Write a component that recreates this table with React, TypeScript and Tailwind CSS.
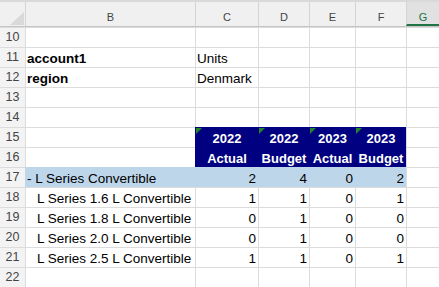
import React from "react";

type CellProps = {
  w: string;
  fill?: "navy" | "band";
  align?: "left" | "right" | "center";
  bold?: boolean;
  indent?: boolean;
  tri?: boolean;
  children?: React.ReactNode;
};

function Cell({ w, fill, align = "left", bold, indent, tri, children }: CellProps) {
  const fillCls =
    fill === "navy"
      ? "bg-[#000080] border-[#000080] text-white"
      : fill === "band"
      ? "bg-[#bdd6ea] border-[#bdd6ea] text-black"
      : "bg-white border-[#dcdcdc] text-black";
  const alignCls =
    align === "right" ? "text-right pr-[2px]" : align === "center" ? "text-center" : indent ? "pl-[11px]" : "pl-[1px]";
  return (
    <div
      className={`${w} relative shrink-0 h-full border-l border-t ${fillCls} ${alignCls} ${
        bold ? "font-bold" : ""
      } ${fill === "navy" ? "text-[13px]" : "text-[13.5px]"} pt-[3px] leading-[15px] whitespace-nowrap overflow-hidden`}
    >
      {tri && (
        <svg className="absolute top-0 left-0" width="6" height="6" viewBox="0 0 6 6">
          <polygon points="0,0 6,0 0,6" fill="#22862a" />
        </svg>
      )}
      {children}
    </div>
  );
}

const W = ["w-[170px]", "w-[63px]", "w-[51px]", "w-[46px]", "w-[51px]"];

type RowDef = {
  n: number;
  cells?: (CellProps | null)[];
};

function Row({ n, cells }: RowDef) {
  const list = cells ?? [null, null, null, null, null];
  return (
    <div className="flex h-[20px]">
      <div className="w-[25px] shrink-0 border-t border-[#dcdcdc] bg-[#f3f3f3] text-center text-[12.5px] leading-[19px] text-[#444]">
        {n}
      </div>
      {W.map((w, i) => {
        const c = list[i];
        return c ? <Cell key={i} {...c} w={w} /> : <Cell key={i} w={w} />;
      })}
      <div className="flex-1 h-full border-l border-t border-[#dcdcdc] bg-white" />
    </div>
  );
}

function child(label: string, a: string, b: string, c: string, d: string): (CellProps | null)[] {
  return [
    { w: "", indent: true, children: label },
    { w: "", align: "right", children: a },
    { w: "", align: "right", children: b },
    { w: "", align: "right", children: c },
    { w: "", align: "right", children: d },
  ];
}

export default function App() {
  const letters = [
    { l: "B", w: "w-[170px]" },
    { l: "C", w: "w-[63px]" },
    { l: "D", w: "w-[51px]" },
    { l: "E", w: "w-[46px]" },
    { l: "F", w: "w-[51px]" },
  ];
  const rows: RowDef[] = [
    { n: 10 },
    { n: 11, cells: [{ w: "", bold: true, children: "account1" }, { w: "", children: "Units" }, null, null, null] },
    { n: 12, cells: [{ w: "", bold: true, children: "region" }, { w: "", children: "Denmark" }, null, null, null] },
    { n: 13 },
    { n: 14 },
    {
      n: 15,
      cells: [
        null,
        { w: "", fill: "navy", bold: true, align: "center", tri: true, children: "2022" },
        { w: "", fill: "navy", bold: true, align: "center", tri: true, children: "2022" },
        { w: "", fill: "navy", bold: true, align: "center", tri: true, children: "2023" },
        { w: "", fill: "navy", bold: true, align: "center", tri: true, children: "2023" },
      ],
    },
    {
      n: 16,
      cells: [
        null,
        { w: "", fill: "navy", bold: true, align: "center", children: "Actual" },
        { w: "", fill: "navy", bold: true, align: "center", children: "Budget" },
        { w: "", fill: "navy", bold: true, align: "center", children: "Actual" },
        { w: "", fill: "navy", bold: true, align: "center", children: "Budget" },
      ],
    },
    {
      n: 17,
      cells: [
        { w: "", fill: "band", children: "- L Series Convertible" },
        { w: "", fill: "band", align: "right", children: "2" },
        { w: "", fill: "band", align: "right", children: "4" },
        { w: "", fill: "band", align: "right", children: "0" },
        { w: "", fill: "band", align: "right", children: "2" },
      ],
    },
    { n: 18, cells: child("L Series 1.6 L Convertible", "1", "1", "0", "1") },
    { n: 19, cells: child("L Series 1.8 L Convertible", "0", "1", "0", "0") },
    { n: 20, cells: child("L Series 2.0 L Convertible", "0", "1", "0", "0") },
    { n: 21, cells: child("L Series 2.5 L Convertible", "1", "1", "0", "1") },
    { n: 22 },
  ];

  return (
    <div className="w-[439px] h-[287px] overflow-hidden bg-white font-['Liberation_Sans',sans-serif]">
      <div className="h-[2px] bg-[#d9d9d9]" />
      <div className="flex h-[25px] bg-[#f0f0f0] border-b border-[#c4c4c4]">
        <div className="w-[25px] shrink-0 flex items-end justify-end pr-[1px] pb-[1px]">
          <svg width="14" height="13" viewBox="0 0 14 13">
            <polygon points="14,0 14,13 0,13" fill="#d9d9d9" />
          </svg>
        </div>
        {letters.map((c) => (
          <div
            key={c.l}
            className={`${c.w} shrink-0 border-l border-[#d4d4d4] text-center text-[11px] leading-[16px] pt-[7px] text-[#444]`}
          >
            {c.l}
          </div>
        ))}
        <div className="flex-1 border-l border-[#d4d4d4] bg-[#e1e1e1] border-b-2 border-b-[#217346] text-center text-[11px] leading-[16px] pt-[7px] text-[#217346]">
          G
        </div>
      </div>
      {rows.map((r) => (
        <Row key={r.n} {...r} />
      ))}
    </div>
  );
}
